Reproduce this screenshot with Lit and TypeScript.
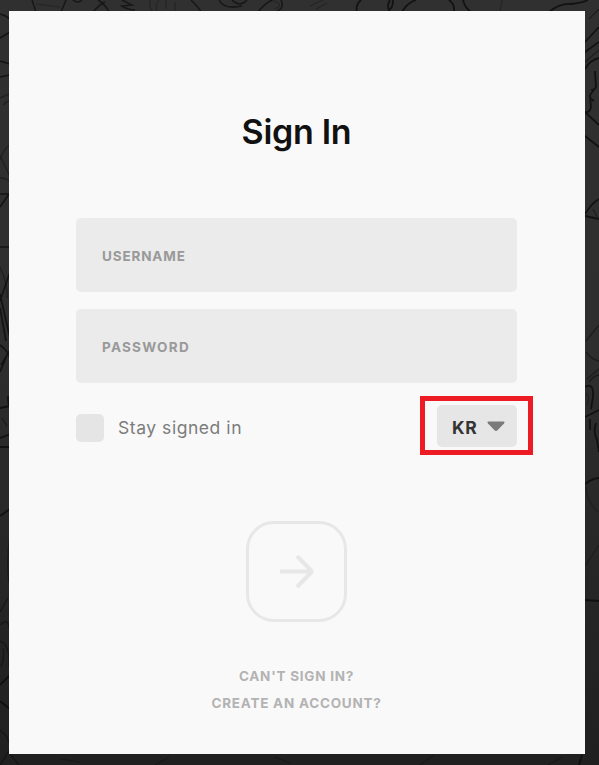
import { LitElement, html, css, svg } from "lit";
import { customElement } from "lit/decorators.js";

const sketchLines: { d: string; w: number; o: number }[] = [
  { d: "M32 0L36 12M61 12L66 0M73 0Q78 4 82 0M93 12Q99 5 105 2M98 0Q106 5 109 12M122 0L132 5L122 6Q128 10 135 10M191 0Q203 12 200 12M219 0Q224 10 242 6M232 0Q240 8 247 0M258 12Q264 4 272 0M281 0Q285 8 276 12", w: 1.6, o: 0.65 },
  { d: "M36 4L60 7M150 0Q149 6 152 12M157 12Q155 3 159 0M166 0V9M175 2V12M270 0Q286 4 275 9M310 6L323 0M316 9L327 3M500 12L502 0", w: 1.2, o: 0.3 },
  { d: "M357 12Q355 5 361 0M390 0Q386 6 390 12M393 0Q393 8 389 10M402 12Q407 3 416 0M449 0Q455 4 454 12M463 0Q465 8 471 12M549 12Q560 3 571 4Q582 3 588 0", w: 1.8, o: 0.8 },
  { d: "M0 14Q5 15 10 19M0 38L10 32M0 61L10 64M0 77L10 75M0 194H10M0 207L9 194M0 247H10M10 272L0 301M0 294L10 338M0 308L6 341M0 345Q8 351 10 358M1 365L10 350M0 372L7 355", w: 1.7, o: 0.75 },
  { d: "M0 98Q8 94 10 94M3 105Q7 101 10 101M0 160Q4 148 10 145M0 155L10 177M0 178Q7 178 10 182M0 267Q8 285 7 298", w: 1.3, o: 0.4 },
  { d: "M0 408L10 406M0 438Q6 436 10 434M0 447H10M0 516L10 509M8 396Q8 405 10 407M0 685L10 675M0 701L10 709", w: 1.8, o: 0.8 },
  { d: "M2 418L7 426M10 537Q6 560 9 583M0 612L8 598M0 625Q9 617 9 629M0 641Q10 644 9 667M3 648Q5 657 1 667M0 730Q8 736 9 743M11 755L19 765M0 765L10 749", w: 1.4, o: 0.5 },
  { d: "M585 42L599 27M585 52L599 42M585 69Q590 60 599 58M595 71L596 87L590 95L591 107Q590 113 585 112M585 112L599 125M585 136L599 147M585 214Q592 203 599 199M585 216L599 219M591 90L595 89M590 98L594 101", w: 1.8, o: 0.8 },
  { d: "M585 62L599 50M589 19L599 9M586 341L599 325M586 352Q592 360 599 361M587 379L599 369M593 209L597 217M589 382Q593 376 599 375", w: 1.3, o: 0.5 },
  { d: "M585 387Q594 382 593 397L591 409M585 417L599 410M590 419V430M596 423Q593 432 597 440L599 452M585 484Q593 478 599 478M585 600L599 601M579 765L582 755", w: 1.8, o: 0.8 },
  { d: "M586 393Q591 397 587 405M586 487Q587 502 598 512M585 566L599 545M548 765L562 757M420 765L434 755M275 757L290 763M155 765L169 757M60 759L80 762", w: 1.2, o: 0.35 },
];

@customElement("app-root")
export class AppRoot extends LitElement {
  static styles = css`
    :host {
      display: block;
      height: 100vh;
      font-family: Inter, "Liberation Sans", sans-serif;
    }
    .page {
      position: relative;
      box-sizing: border-box;
      height: 765px;
      width: 599px;
      padding: 11px 14px 11px 9px;
      background: linear-gradient(#303030, #2e2e2e 45%, #202020);
      overflow: hidden;
    }
    .sketch {
      position: absolute;
      inset: 0;
    }
    .card {
      position: relative;
      box-sizing: border-box;
      height: 743px;
      padding: 99px 68px 0 67px;
      background: #f9f9f9;
      display: flex;
      flex-direction: column;
    }
    h1 {
      margin: 0 0 64px;
      height: 44px;
      font-weight: 600;
      font-size: 34px;
      line-height: 44px;
      letter-spacing: -0.3px;
      text-align: center;
      color: #111;
      white-space: nowrap;
    }
    .field {
      height: 74px;
      box-sizing: border-box;
      padding: 1px 26px 0;
      margin-bottom: 17px;
      border-radius: 5px;
      background: #ebebeb;
      display: flex;
      align-items: center;
      color: #999;
      font-weight: 700;
      font-size: 13.5px;
    }
    .user { letter-spacing: 0.85px; }
    .pass { letter-spacing: 1.25px; }
    .options {
      height: 42px;
      margin-top: 5px;
      display: flex;
      align-items: center;
      justify-content: space-between;
    }
    .stay {
      display: flex;
      align-items: center;
      gap: 14px;
      padding-top: 4px;
      color: #7c7c7c;
      font-size: 17.5px;
      letter-spacing: 0.55px;
    }
    .stay-text { padding-bottom: 2px; }
    .box {
      width: 28px;
      height: 28px;
      border-radius: 5px;
      background: #e5e5e5;
    }
    .region {
      position: relative;
      box-sizing: border-box;
      width: 80px;
      height: 42px;
      padding: 0 12px 0 15px;
      border-radius: 5px;
      background: #e6e6e6;
      display: flex;
      align-items: center;
      justify-content: space-between;
      color: #343434;
      font-weight: 700;
      font-size: 17.5px;
      letter-spacing: 0.6px;
    }
    .code { padding-top: 3px; }
    .mark {
      position: absolute;
      left: -17px;
      top: -9px;
      width: 103px;
      height: 49px;
      border: 5px solid #ed1c24;
    }
    .submit {
      align-self: center;
      box-sizing: border-box;
      width: 101px;
      height: 101px;
      margin-top: 74px;
      border: 3px solid #e7e7e7;
      border-radius: 28px;
      display: flex;
      align-items: center;
      justify-content: center;
    }
    .links {
      margin-top: 41px;
      text-align: center;
      color: #b3b3b3;
      font-weight: 700;
      font-size: 13.5px;
      line-height: 27px;
      letter-spacing: 0.75px;
    }
  `;

  render() {
    return html`
      <div class="page">
        <svg class="sketch" width="599" height="765" fill="none" stroke="#0b0b0b">
          ${sketchLines.map((l) => svg`<path d=${l.d} stroke-width=${l.w} opacity=${l.o} />`)}
        </svg>
        <main class="card">
          <h1>Sign In</h1>
          <div class="field user">USERNAME</div>
          <div class="field pass">PASSWORD</div>
          <div class="options">
            <div class="stay"><span class="box"></span><span class="stay-text">Stay signed in</span></div>
            <div class="region">
              <span class="code">KR</span>
              <svg width="18" height="11" viewBox="0 0 18 11">
                <path d="M1.5 .5H16.5Q18.3 .8 17 2.5L10.5 9.2Q9 10.6 7.5 9.2L1 2.5Q-.3 .8 1.5 .5Z" fill="#7a7a7a" />
              </svg>
              <div class="mark"></div>
            </div>
          </div>
          <div class="submit">
            <svg width="34" height="34" viewBox="0 0 34 34" fill="none" stroke="#e7e7e7" stroke-width="4">
              <path d="M0 16.5H32M17 1L32 16.5L17 32" stroke-linejoin="bevel" />
            </svg>
          </div>
          <div class="links">
            <div>CAN'T SIGN IN?</div>
            <div>CREATE AN ACCOUNT?</div>
          </div>
        </main>
      </div>
    `;
  }
}
